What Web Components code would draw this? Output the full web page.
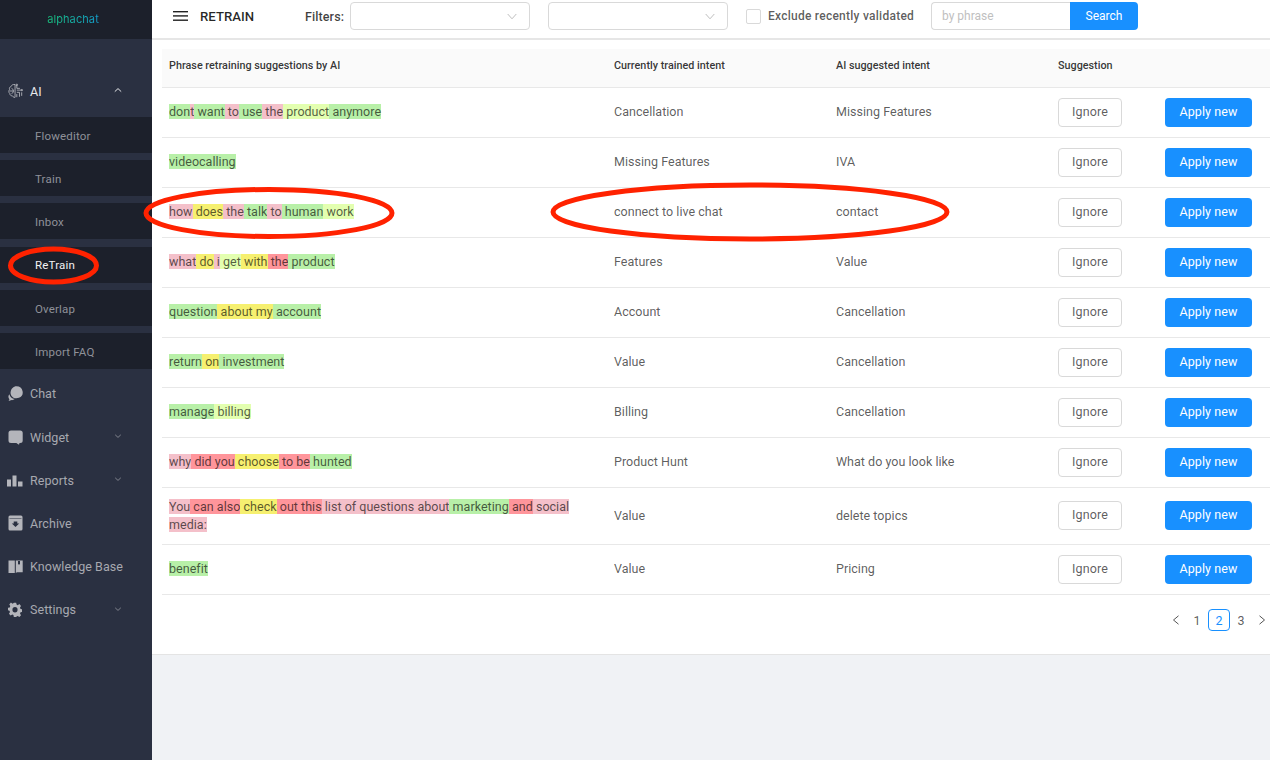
<!DOCTYPE html>
<html><head><meta charset="utf-8"><title>Retrain</title>
<style>
html,body{margin:0;height:100%;overflow:hidden;background:#f0f2f5;font-family:Roboto,"Liberation Sans",sans-serif}
</style></head><body>
<retrain-app>
<side-bar slot="side"></side-bar>
<top-bar slot="top"></top-bar>
<retrain-table slot="main">
<retrain-row cur="Cancellation" ai="Missing Features"><hl-t k="g">don</hl-t><hl-t k="p">t</hl-t><hl-t k="g"> want</hl-t><hl-t k="p"> to</hl-t><hl-t k="g"> use</hl-t><hl-t k="p"> the</hl-t><hl-t k="l"> product</hl-t><hl-t k="g"> anymore</hl-t></retrain-row>
<retrain-row cur="Missing Features" ai="IVA"><hl-t k="g">videocalling</hl-t></retrain-row>
<retrain-row cur="connect to live chat" ai="contact"><hl-t k="p">how</hl-t><hl-t k="y"> does</hl-t><hl-t k="p"> the</hl-t><hl-t k="g"> talk</hl-t><hl-t k="p"> to</hl-t><hl-t k="g"> human</hl-t><hl-t k="l"> work</hl-t></retrain-row>
<retrain-row cur="Features" ai="Value"><hl-t k="p">what</hl-t><hl-t k="y"> do</hl-t><hl-t k="p"> i</hl-t><hl-t k="l"> get</hl-t><hl-t k="y"> with</hl-t><hl-t k="r"> the</hl-t><hl-t k="g"> product</hl-t></retrain-row>
<retrain-row cur="Account" ai="Cancellation"><hl-t k="g">question</hl-t><hl-t k="y"> about my</hl-t><hl-t k="g"> account</hl-t></retrain-row>
<retrain-row cur="Value" ai="Cancellation"><hl-t k="g">return</hl-t><hl-t k="y"> on</hl-t><hl-t k="g"> investment</hl-t></retrain-row>
<retrain-row cur="Billing" ai="Cancellation"><hl-t k="g">manage</hl-t><hl-t k="l"> billing</hl-t></retrain-row>
<retrain-row cur="Product Hunt" ai="What do you look like"><hl-t k="p">why</hl-t><hl-t k="r"> did you</hl-t><hl-t k="y"> choose</hl-t><hl-t k="r"> to be</hl-t><hl-t k="g"> hunted</hl-t></retrain-row>
<retrain-row cur="Value" ai="delete topics"><hl-t k="p">You</hl-t><hl-t k="r"> can also</hl-t><hl-t k="y"> check</hl-t><hl-t k="r"> out this</hl-t><hl-t k="p"> list of questions about</hl-t><hl-t k="g"> marketing</hl-t><hl-t k="r"> and</hl-t><hl-t k="p"> social</hl-t> <hl-t k="p">media:</hl-t></retrain-row>
<retrain-row cur="Value" ai="Pricing"><hl-t k="g">benefit</hl-t></retrain-row>
</retrain-table>
</retrain-app>
<script>
const chev=(up,c)=>`<svg width="8" height="6" viewBox="0 0 8 6" fill="none" stroke="${c}" stroke-width="1"><path d="${up?'M.8 4.600 4 1.600l3.200 3':'M1.200 1.800 4 4.400l2.800-2.600'}"/></svg>`;
const ICONS={
ai:`<svg width="18" height="18" viewBox="0 0 17 17" fill="none" stroke="#c4c5ca" stroke-width=".9" style="margin-left:1px"><path d="M8 1.200C5.600.8 4 1.800 3.600 3.300 2 3.800 1.200 5.300 1.800 6.800.6 8.200.7 10.300 2 11.200c0 1.900 1.600 3 3 2.800 .9 1.500 2.300 2.100 3 1.700z"/><path d="M4 5.500l2 1.500v3L4 11.500M1.800 8.500H6"/><path d="M10 1.500v4h3.500M10 7.500h5.500M10 10h3v5M15.500 10v4M10 12v3.500"/><circle cx="10" cy="1.500" r=".8"/><circle cx="15.700" cy="7.500" r=".8"/></svg>`,
chat:`<svg width="15" height="15" viewBox="0 0 15 15" fill="#b4b5bb"><path d="M8.500 .3a6.300 6 0 0 1 2.400 11.500c-1.900.7-4.300.6-5.800-.4C3.300 10.200 2.300 8.300 2.600 6.200 3 2.900 5.500.3 8.500.3z"/><path d="M1.400 8.300c.5 2.500 2.500 4.300 5.300 4.800-1 .9-2.400 1.200-3.500 1-.4.300-1.700.8-2.700.7.500-.5.900-1 .9-1.500C.2 11.800-.1 9.900 1.400 8.300z"/></svg>`,
widget:`<svg width="15" height="15" viewBox="0 0 15 15" fill="#b4b5bb"><path d="M3 .5h9.200A2.500 2.500 0 0 1 14.700 3v7.500a2.500 2.500 0 0 1-2.500 2.500h-.7l-.5 1.800L8.300 13H3A2.500 2.500 0 0 1 .5 10.500V3A2.500 2.500 0 0 1 3 .5z"/></svg>`,
reports:`<svg width="16" height="15" viewBox="0 0 16 15" fill="#b4b5bb"><rect x="0" y="6.500" width="4" height="7"/><rect x="5.500" y="2.500" width="4" height="11"/><rect x="11" y="8.500" width="4.500" height="5"/></svg>`,
archive:`<svg width="15" height="16" viewBox="0 0 15 16" fill="#b4b5bb"><path fill-rule="evenodd" d="M2 .5h11a1.500 1.500 0 0 1 1.500 1.500v12a1.500 1.500 0 0 1-1.500 1.500H2A1.500 1.500 0 0 1 .5 14V2A1.500 1.500 0 0 1 2 .5zM1.500 3.200v.6h12v-.6zM5.700 6.500v2H3.800l3.700 3.600 3.700-3.600H9.300v-2z"/></svg>`,
kb:`<svg width="15" height="15" viewBox="0 0 15 15" fill="#b4b5bb"><path d="M.5 1.500h6.300v12.500H.5z"/><path fill-rule="evenodd" d="M7.800 1.500h6.900v11.700H9l-1.200.8zM10 2v3.800l1-.8 1 .8V2z"/></svg>`,
settings:`<svg width="14" height="15" viewBox="0 0 24 24" fill="#b4b5bb" preserveAspectRatio="none"><path fill-rule="evenodd" d="M10 1h4l.7 3.100 2 .9 2.800-1.700 2.800 2.900-1.700 2.700.9 2.100 3 .7v4l-3 .7-.9 2 1.700 2.800-2.800 2.800-2.800-1.700-2 .9L14 24h-4l-.7-3.200-2-.9-2.800 1.700-2.800-2.800 1.700-2.800-.9-2L0 13.300v-4l3-.7.9-2.100L2.200 3.800 5 .9l2.800 1.700 2-.9zM12 8a4.400 4.400 0 1 0 0 8.800A4.400 4.400 0 0 0 12 8z"/></svg>`
};
function def(name,html,setup){customElements.define(name,class extends HTMLElement{
  connectedCallback(){if(this.shadowRoot)return;const r=this.attachShadow({mode:'open'});
    r.innerHTML=typeof html==='function'?html(this):html;if(setup)setup(r,this);}
});}

def('hl-t',`<style>:host{display:inline}
:host([k=g]){background:#b8f0a8}:host([k=p]){background:#f4c0ca}:host([k=y]){background:#f6f070}
:host([k=l]){background:#e3ffb0}:host([k=r]){background:#ff959b}</style><slot></slot>`);

def('nav-item',h=>`<style>
:host{display:flex;align-items:center;height:36px;position:relative;font-size:12.5px;letter-spacing:.05px;color:#a7a9b0}
:host([open]){color:#e8e9ec}
.i{position:absolute;left:7px;top:0;bottom:0;width:16px;display:flex;align-items:center;justify-content:center}
.t{margin-left:30px}.c{position:absolute;left:114px;top:14px;display:flex}
</style><span class="i">${ICONS[h.getAttribute('icon')]}</span><span class="t"><slot></slot></span>
${h.hasAttribute('chev')?`<span class="c">${chev(h.hasAttribute('open'),h.hasAttribute('open')?'#e8e9ec':'#7f828c')}</span>`:''}`);

def('sub-item',`<style>:host{display:flex;align-items:center;height:36px;padding-left:35px;background:#1c202b;font-size:11.5px;letter-spacing:.18px;color:#8f9199}
:host([active]){color:#f2f2f4}</style><span style="padding-top:1.6px"><slot></slot></span>`);

def('side-bar',`<style>
:host{display:flex;flex-direction:column;width:152px;height:760px;background:#2a3041;flex:none}
.logo{height:39px;background:#1c202b;display:flex;align-items:center;justify-content:center;font:400 11px Inter,Roboto,sans-serif;letter-spacing:.1px;margin-bottom:34px;padding:0 6px 2px 0;box-sizing:border-box}
.logo span{background:linear-gradient(90deg,#19c07c,#139ccc);-webkit-background-clip:text;background-clip:text;color:transparent}
.sub,.nav{display:flex;flex-direction:column;gap:7.2px}.sub{margin:8px 0 6.3px}
.nav{padding-top:.7px}
</style>
<div class="logo"><span>alphachat</span></div>
<nav-item icon="ai" chev open>AI</nav-item>
<div class="sub"><sub-item>Floweditor</sub-item><sub-item>Train</sub-item><sub-item>Inbox</sub-item><sub-item active>ReTrain</sub-item><sub-item>Overlap</sub-item><sub-item>Import FAQ</sub-item></div>
<div class="nav"><nav-item icon="chat">Chat</nav-item><nav-item icon="widget" chev>Widget</nav-item><nav-item icon="reports" chev>Reports</nav-item><nav-item icon="archive">Archive</nav-item><nav-item icon="kb">Knowledge Base</nav-item><nav-item icon="settings" chev>Settings</nav-item></div>`);

def('select-box',`<style>:host{display:flex;align-items:center;justify-content:flex-end;width:180px;height:28px;box-sizing:border-box;border:1px solid #d9d9d9;border-radius:4px;background:#fff;padding-right:12px}</style>
<svg width="10" height="7" viewBox="0 0 10 7" fill="none" stroke="#bfbfbf"><path d="M.7 1 5 5.800 9.300 1"/></svg>`);

def('top-bar',`<style>
:host{display:flex;height:38px;border-bottom:2px solid #e6e6e6;background:#fff;font-size:12px;color:rgba(0,0,0,.75)}
.row{display:flex;align-items:center;height:32px}
.ham{margin-left:21px;display:flex;margin-top:-1px}
.title{margin-left:12px;font-size:13.2px;font-weight:500;width:105px;color:rgba(0,0,0,.85)}
.f{font-weight:500;width:45px;font-size:12.500px;letter-spacing:.1px;color:rgba(0,0,0,.75)}
.sp{width:18px}
.cb{width:15px;height:15px;box-sizing:border-box;border:1px solid #d9d9d9;border-radius:2px;margin-left:18px}
.ex{margin-left:7px;font-weight:500;width:163px;color:rgba(0,0,0,.65);letter-spacing:.25px}
.in{width:139px;height:28px;box-sizing:border-box;border:1px solid #d9d9d9;border-right:0;border-radius:4px 0 0 4px;padding-left:10px;display:flex;align-items:center;color:#bfbfbf}
.s{width:68px;height:28px;background:#1890ff;color:#fff;border-radius:0 4px 4px 0;display:flex;align-items:center;justify-content:center}
</style>
<div class="row">
<span class="ham"><svg width="15" height="10" viewBox="0 0 15 10" fill="#222"><rect width="15" height="1.400"/><rect y="4.200" width="15" height="1.400"/><rect y="8.500" width="15" height="1.400"/></svg></span>
<span class="title">RETRAIN</span><span class="f">Filters:</span>
<select-box></select-box><span class="sp"></span><select-box></select-box>
<span class="cb"></span><span class="ex">Exclude recently validated</span>
<span class="in">by phrase</span><span class="s">Search</span>
</div>`);

def('pager-bar',`<style>
:host{display:flex;align-items:center;height:22px;font-size:12.5px;color:rgba(0,0,0,.65)}
span{display:flex;align-items:center;justify-content:center}
.a{width:22px;height:22px;box-sizing:border-box;border:1px solid #1890ff;border-radius:4px;color:#1890ff}
.n{width:22px}
</style>
<span style="width:20px"><svg width="8" height="10" viewBox="0 0 8 10" fill="none" stroke="#555"><path d="M6.500 .8 1.500 5l5 4.200"/></svg></span>
<span class="n">1</span><span class="a">2</span><span class="n">3</span>
<span style="width:18px;padding-left:2px;box-sizing:border-box"><svg width="8" height="10" viewBox="0 0 8 10" fill="none" stroke="#555"><path d="M1.500 .8 6.500 5l-5 4.200"/></svg></span>`);

def('retrain-table',`<style>
:host{display:block;background:#fff;border-bottom:1px solid #e4e4e4;padding:9px 0 0 10px;height:605px;font-size:12.500px;color:rgba(0,0,0,.65)}
.h{display:grid;grid-template-columns:445px 222px 222px 1fr;height:38px;padding-bottom:0;align-items:start;background:#fafafa;border-bottom:1px solid #e8e8e8;font-size:10.8px;font-weight:500;color:rgba(0,0,0,.8)}
.h span{padding:10px 0 0 7px}
.p{display:flex;justify-content:flex-end;padding-top:14px}
</style>
<div class="h"><span>Phrase retraining suggestions by AI</span><span>Currently trained intent</span><span>AI suggested intent</span><span>Suggestion</span></div>
<slot></slot>
<div class="p"><pager-bar></pager-bar></div>`);

def('retrain-row',h=>`<style>
:host{display:grid;grid-template-columns:445px 222px 222px 107px 1fr;align-items:center;min-height:49px;border-bottom:1px solid #e8e8e8;font-size:12.500px;letter-spacing:.03px;line-height:18px}
div{padding:0 7px 1px}
.ph{padding-top:9.5px;padding-bottom:10.5px}
.bc{padding-bottom:1px;display:flex}
.b{display:flex;align-items:center;justify-content:center;height:29px;box-sizing:border-box;border-radius:4px;padding-bottom:1px;letter-spacing:.1px}
.ig{width:64px;border:1px solid #d9d9d9;background:#fff;color:rgba(0,0,0,.65)}
.ap{width:87px;background:#1890ff;color:#fff}
</style>
<div class="ph"><slot></slot></div><div>${h.getAttribute('cur')}</div><div>${h.getAttribute('ai')}</div>
<div class="bc"><span class="b ig">Ignore</span></div><div class="bc"><span class="b ap">Apply new</span></div>`);

def('retrain-app',`<style>
:host{display:flex;width:1270px;height:760px;position:relative;overflow:hidden;background:#f0f2f5}
.m{flex:1;display:flex;flex-direction:column;min-width:0}
svg{position:absolute;left:0;top:0;pointer-events:none}
</style>
<slot name="side"></slot>
<div class="m"><slot name="top"></slot><slot name="main"></slot></div>
<svg width="1270" height="760" fill="none" stroke="#ff2200" stroke-width="5">
<ellipse cx="269" cy="213" rx="123" ry="23.500"/>
<ellipse cx="750" cy="212" rx="197" ry="27"/>
<ellipse cx="53.500" cy="265.500" rx="43" ry="16.500"/>
</svg>`);
</script>
</body></html>
